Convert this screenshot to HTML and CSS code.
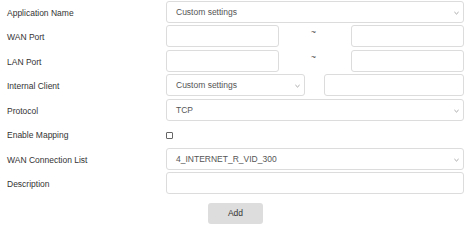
FILE: index.html
```html
<!DOCTYPE html>
<html>
<head>
<meta charset="utf-8">
<link rel="stylesheet" href="styles.css">
</head>
<body>
<div class="form">
  <div class="label">Application Name</div>
  <div class="ctrl">
    <div class="select full"><span>Custom settings</span><svg class="chev" viewBox="0 0 6 4"><path d="M0.5 0.8 L3 3.2 L5.5 0.8" /></svg></div>
  </div>

  <div class="label">WAN Port</div>
  <div class="ctrl range">
    <div class="input port"></div>
    <div class="tilde">~</div>
    <div class="input port"></div>
  </div>

  <div class="label">LAN Port</div>
  <div class="ctrl range">
    <div class="input port"></div>
    <div class="tilde">~</div>
    <div class="input port"></div>
  </div>

  <div class="label">Internal Client</div>
  <div class="ctrl client">
    <div class="select half"><span>Custom settings</span><svg class="chev" viewBox="0 0 6 4"><path d="M0.5 0.8 L3 3.2 L5.5 0.8" /></svg></div>
    <div class="input half2"></div>
  </div>

  <div class="label">Protocol</div>
  <div class="ctrl">
    <div class="select full"><span>TCP</span><svg class="chev" viewBox="0 0 6 4"><path d="M0.5 0.8 L3 3.2 L5.5 0.8" /></svg></div>
  </div>

  <div class="label">Enable Mapping</div>
  <div class="ctrl check-row">
    <div class="checkbox"></div>
  </div>

  <div class="label">WAN Connection List</div>
  <div class="ctrl">
    <div class="select full"><span>4_INTERNET_R_VID_300</span><svg class="chev" viewBox="0 0 6 4"><path d="M0.5 0.8 L3 3.2 L5.5 0.8" /></svg></div>
  </div>

  <div class="label">Description</div>
  <div class="ctrl">
    <div class="input full"></div>
  </div>
</div>
<div class="actions">
  <button class="btn">Add</button>
</div>
</body>
</html>
```
FILE: styles.css
```css
html, body {
  margin: 0;
  padding: 0;
  background: #ffffff;
}
body {
  font-family: "Liberation Sans", Arial, sans-serif;
  font-size: 8.5px;
  color: #333333;
}
.form {
  display: grid;
  grid-template-columns: 166px 298px;
  grid-auto-rows: 22px;
  row-gap: 2.57px;
  padding-top: 0.5px;
}
.label {
  padding-left: 7px;
  display: flex;
  align-items: center;
  padding-top: 2px;
  box-sizing: border-box;
  color: #333333;
}
.ctrl {
  display: flex;
  align-items: stretch;
}
.select, .input {
  box-sizing: border-box;
  height: 22px;
  border: 1px solid #dcdcdc;
  border-radius: 3px;
  background: #ffffff;
}
.select {
  position: relative;
  display: flex;
  align-items: center;
  padding-left: 9px;
  color: #555555;
}
.full { width: 298px; }
.port { width: 113px; }
.half { width: 139px; }
.half2 { width: 140px; margin-left: 19px; }
.tilde {
  width: 72px;
  text-align: center;
  color: #444444;
  padding-top: 3px;
  padding-right: 3px;
  box-sizing: border-box;
  line-height: 8px;
}
.chev {
  position: absolute;
  right: 4px;
  top: 9px;
  width: 5px;
  height: 4px;
  fill: none;
  stroke: #888888;
  stroke-width: 0.9;
}
.check-row {
  align-items: center;
  padding-top: 2px;
}
.checkbox {
  width: 5px;
  height: 5px;
  border: 1px solid #666666;
  border-radius: 1px;
  background: #ffffff;
}
.actions {
  padding-left: 208px;
  padding-top: 8.5px;
}
.btn {
  width: 55px;
  height: 21px;
  border: none;
  border-radius: 3px;
  background: #dddddd;
  color: #333333;
  font-family: "Liberation Sans", Arial, sans-serif;
  font-size: 8.5px;
  padding: 0;
}
```
